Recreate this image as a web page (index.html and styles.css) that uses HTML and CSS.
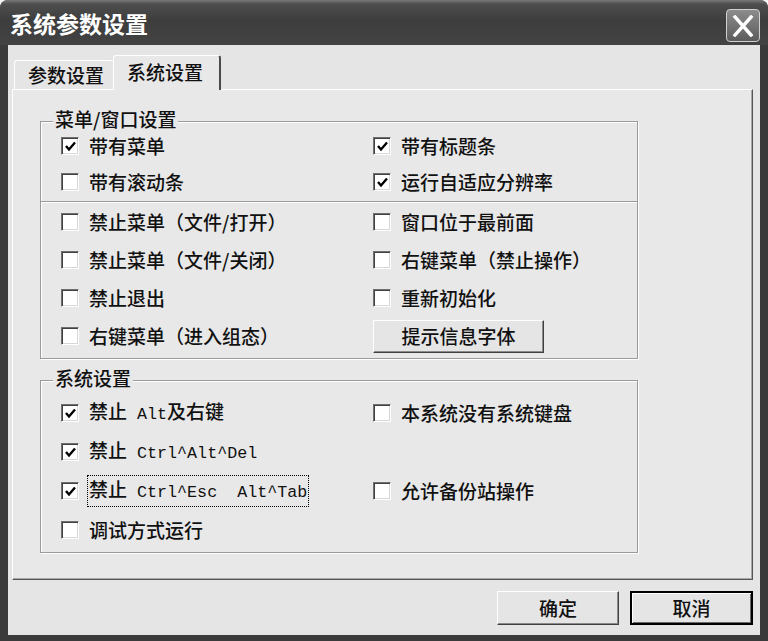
FILE: index.html
```html
<!DOCTYPE html>
<html lang="zh-CN">
<head>
<meta charset="utf-8">
<title>系统参数设置</title>
<link rel="stylesheet" href="styles.css">
</head>
<body>
<div class="window">
  <div class="titlebar">
    <span class="title">系统参数设置</span>
    <span class="close"><svg width="22" height="22" viewBox="0 0 22 22"><path d="M3 2 L19 20 M19 2 L3 20" stroke="#fff" stroke-width="3.4" fill="none" stroke-linecap="square"/></svg></span>
  </div>
  <div class="client">
    <div class="tabs">
      <div class="tab">参数设置</div>
      <div class="tab active">系统设置</div>
    </div>
    <div class="panel">
      <div class="group g1">
        <span class="legend">菜单/窗口设置</span>
        <div class="grid top">
          <label class="item"><span class="cb"><svg width="15" height="15" viewBox="0 0 15 15"><path d="M3 7 L6 10.5 L12 3.5" stroke="#000" stroke-width="2.4" fill="none"/></svg></span><span>带有菜单</span></label>
          <label class="item"><span class="cb"><svg width="15" height="15" viewBox="0 0 15 15"><path d="M3 7 L6 10.5 L12 3.5" stroke="#000" stroke-width="2.4" fill="none"/></svg></span><span>带有标题条</span></label>
          <label class="item"><span class="cb"></span><span>带有滚动条</span></label>
          <label class="item"><span class="cb"><svg width="15" height="15" viewBox="0 0 15 15"><path d="M3 7 L6 10.5 L12 3.5" stroke="#000" stroke-width="2.4" fill="none"/></svg></span><span>运行自适应分辨率</span></label>
        </div>
        <div class="sep"></div>
        <div class="grid bottom">
          <label class="item"><span class="cb"></span><span>禁止菜单（文件/打开）</span></label>
          <label class="item"><span class="cb"></span><span>窗口位于最前面</span></label>
          <label class="item"><span class="cb"></span><span>禁止菜单（文件/关闭）</span></label>
          <label class="item"><span class="cb"></span><span>右键菜单（禁止操作）</span></label>
          <label class="item"><span class="cb"></span><span>禁止退出</span></label>
          <label class="item"><span class="cb"></span><span>重新初始化</span></label>
          <label class="item"><span class="cb"></span><span>右键菜单（进入组态）</span></label>
          <div class="cell"><button class="btn font">提示信息字体</button></div>
        </div>
      </div>
      <div class="group g2">
        <span class="legend">系统设置</span>
        <div class="grid sys">
          <label class="item"><span class="cb"><svg width="15" height="15" viewBox="0 0 15 15"><path d="M3 7 L6 10.5 L12 3.5" stroke="#000" stroke-width="2.4" fill="none"/></svg></span><span>禁止<span class="en"> Alt</span>及右键</span></label>
          <label class="item"><span class="cb"></span><span>本系统没有系统键盘</span></label>
          <label class="item"><span class="cb"><svg width="15" height="15" viewBox="0 0 15 15"><path d="M3 7 L6 10.5 L12 3.5" stroke="#000" stroke-width="2.4" fill="none"/></svg></span><span>禁止<span class="en"> Ctrl^Alt^Del</span></span></label>
          <div class="cell"></div>
          <label class="item"><span class="cb"><svg width="15" height="15" viewBox="0 0 15 15"><path d="M3 7 L6 10.5 L12 3.5" stroke="#000" stroke-width="2.4" fill="none"/></svg></span><span class="focus">禁止<span class="en"> Ctrl^Esc  Alt^Tab</span></span></label>
          <label class="item"><span class="cb"></span><span>允许备份站操作</span></label>
          <label class="item"><span class="cb"></span><span>调试方式运行</span></label>
          <div class="cell"></div>
        </div>
      </div>
    </div>
    <div class="buttons">
      <button class="btn ok">确定</button>
      <button class="btn cancel">取消</button>
    </div>
  </div>
</div>
</body>
</html>
```
FILE: styles.css
```css
* { box-sizing: border-box; }
html, body { margin: 0; padding: 0; }
body {
  width: 768px;
  height: 641px;
  overflow: hidden;
  background: #f4f4f4;
  font-family: "Noto Sans CJK SC", "Noto Sans CJK JP", sans-serif;
  color: #111;
}
.window {
  width: 768px;
  height: 641px;
  background: #3a3a3a;
  border-radius: 8px 8px 0 0;
  display: flex;
  flex-direction: column;
}
.titlebar {
  height: 45px;
  flex: none;
  display: flex;
  align-items: center;
  justify-content: space-between;
  padding: 0 8px 0 10px;
  background: linear-gradient(#7a7a7a 0, #4e4e4e 4px, #3d3d3d 45%, #434343 100%);
  border-radius: 8px 8px 0 0;
}
.title {
  color: #fff;
  font-size: 23px;
  font-weight: 700;
  line-height: 1;
  margin-top: 2px;
}
.close {
  width: 34px;
  height: 33px;
  margin-top: 6px;
  border: 1px solid #d0d0d0;
  border-radius: 4px;
  background: linear-gradient(#8c8c8c, #5c5c5c);
  display: flex;
  align-items: center;
  justify-content: center;
}
.client {
  flex: 1;
  margin: 0 8px 6px;
  background: #e5e5e5;
  display: flex;
  flex-direction: column;
  padding: 10px 7px 0 4px;
}
.tabs {
  display: flex;
  align-items: flex-end;
  height: 34px;
  padding-left: 2px;
  position: relative;
  z-index: 1;
}
.tab {
  width: 99px;
  height: 29px;
  font-size: 19px;
  font-weight: 500;
  line-height: 24px;
  padding: 2px 0 0 13px;
  border-top: 1px solid #fff;
  border-left: 1px solid #fff;
  border-radius: 3px 3px 0 0;
  background: #e5e5e5;
  white-space: nowrap;
}
.tab.active {
  width: 108px;
  height: 35px;
  margin-bottom: -1px;
  padding: 4px 0 0 13px;
  border-right: 2px solid #4a4a4a;
  background: #e8e8e8;
}
.panel {
  height: 491px;
  background: #e8e8e8;
  border-top: 1px solid #fff;
  border-left: 1px solid #fff;
  border-right: 1px solid #555;
  border-bottom: 1px solid #555;
  box-shadow: inset -1px -1px 0 #a8a8a8;
  padding: 31px 0 0 27px;
}
.group {
  position: relative;
  width: 598px;
  border: 1px solid #9a9a9a;
  box-shadow: inset 1px 1px 0 #fff, 1px 1px 0 #fff;
}
.g2 { margin-top: 21px; }
.legend {
  position: absolute;
  left: 12px;
  top: -15px;
  padding: 0 2px;
  background: #e8e8e8;
  font-size: 19px;
  font-weight: 500;
  line-height: 24px;
  white-space: nowrap;
}
.grid {
  display: grid;
  grid-template-columns: 312px 1fr;
  padding-left: 21px;
}
.grid.top { padding-top: 6px; grid-auto-rows: 36px; }
.grid.bottom { grid-auto-rows: 38px; padding-bottom: 3px; }
.grid.sys { padding-top: 12px; grid-auto-rows: 39px; padding-bottom: 3px; }
.sep {
  height: 2px;
  margin-top: 1px;
  border-top: 1px solid #9a9a9a;
  background: #fff;
}
.item {
  display: flex;
  align-items: center;
  gap: 11px;
  font-size: 19px;
  font-weight: 500;
  line-height: 24px;
  white-space: nowrap;
}
.cell { display: flex; align-items: center; }
.cb {
  width: 18px;
  height: 18px;
  flex: none;
  background: #fff;
  border: 1px solid;
  border-color: #707070 #fff #fff #707070;
  box-shadow: inset 1px 1px 0 #404040, inset -1px -1px 0 #d8d8d8;
  display: flex;
  align-items: center;
  justify-content: center;
}
.item .cb { margin-left: -1px; margin-right: -1px; }
.cb svg { margin: 1px 0 0 1px; }
.en {
  font-family: "Liberation Mono", monospace;
  font-size: 16.7px;
  font-weight: 400;
  white-space: pre;
}
.focus {
  outline: 1px dotted #000;
  outline-offset: 1px;
}
.btn {
  height: 34px;
  font-family: inherit;
  font-size: 19px;
  font-weight: 500;
  line-height: 24px;
  color: #111;
  background: #e5e5e5;
  padding: 0;
  border: 1px solid;
  border-color: #fff #404040 #404040 #fff;
  box-shadow: inset -1px -1px 0 #8a8a8a;
}
.btn.font {
  width: 171px;
  height: 33px;
  margin-left: -1px;
}
.buttons {
  margin-top: 11px;
  display: flex;
  justify-content: flex-end;
  gap: 11px;
}
.btn.ok { width: 122px; }
.btn.cancel {
  width: 123px;
  border: 2px solid #000;
  box-shadow: inset 1px 1px 0 #fff, inset -1px -1px 0 #6a6a6a;
}
```
